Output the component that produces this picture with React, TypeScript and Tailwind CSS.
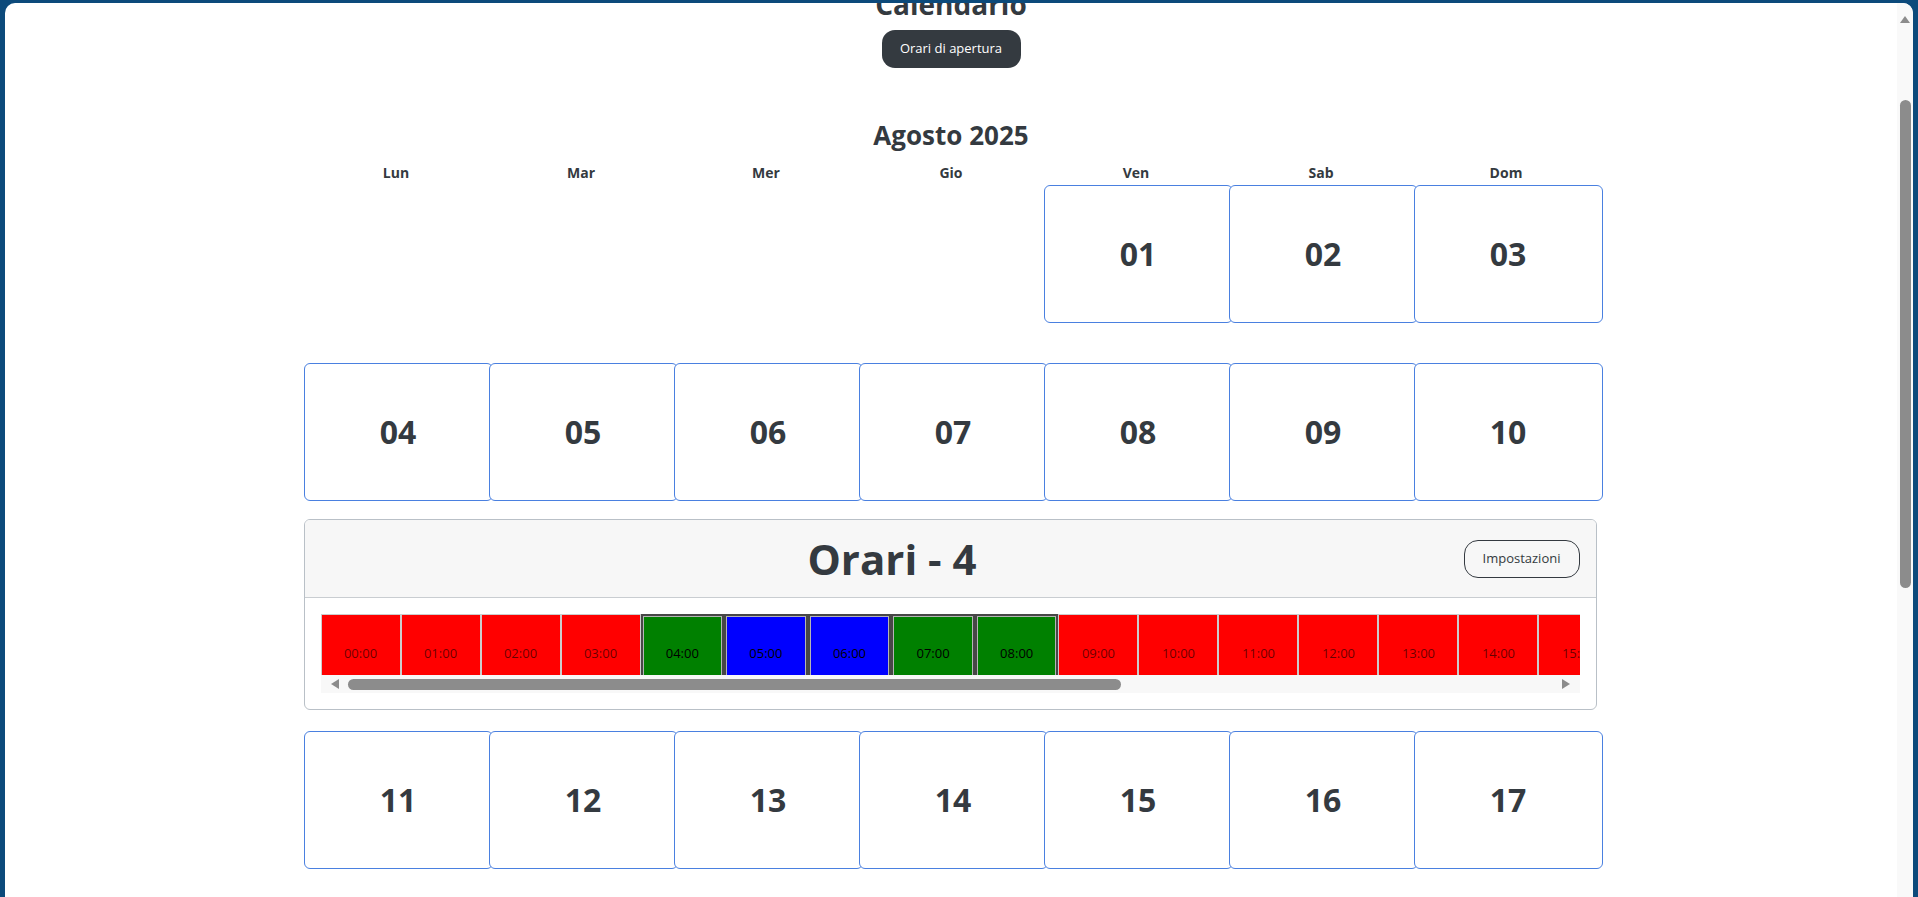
type Slot = { hour: string; state: 'closed' | 'open' | 'special' };

const font = { fontFamily: '"Open Sans", "Noto Sans", sans-serif' };

const weeks: (string | null)[][] = [
  [null, null, null, null, '01', '02', '03'],
  ['04', '05', '06', '07', '08', '09', '10'],
  ['11', '12', '13', '14', '15', '16', '17'],
];

const dayNames = ['Lun', 'Mar', 'Mer', 'Gio', 'Ven', 'Sab', 'Dom'];

// 24 fasce orarie, quelle aperte sono evidenziate
const slots: Slot[] = Array.from({ length: 24 }, (_, h) => ({
  hour: `${String(h).padStart(2, '0')}:00`,
  state: h === 5 || h === 6 ? 'special' : h >= 4 && h <= 8 ? 'open' : 'closed',
}));

function DayBox({ day }: { day: string | null }) {
  if (!day) return <div className="h-[138px]" />;
  return (
    <div className="w-[189px] h-[138px] rounded-[6px] border border-[#4a80e0] bg-white flex items-center justify-center">
      <span className="text-[32px] font-bold text-[#343a40] leading-none">{day}</span>
    </div>
  );
}

function Week({ days, className = '' }: { days: (string | null)[]; className?: string }) {
  return (
    <div className={`grid grid-cols-[repeat(7,185px)] ${className}`}>
      {days.map((d, i) => (
        <DayBox key={i} day={d} />
      ))}
    </div>
  );
}

function SlotCell({ slot }: { slot: Slot }) {
  const styles = {
    closed: 'w-[80px] bg-[#ff0000] border border-[#cccccc] text-black/60',
    open: 'w-[83.6px] bg-[#008000] border-2 border-[#474747] ring-1 ring-inset ring-[#b5b5b5] text-black',
    special: 'w-[83.6px] bg-[#0000ff] border-2 border-[#474747] ring-1 ring-inset ring-[#b5b5b5] text-black',
  };
  return (
    <div className={`shrink-0 h-[80px] flex items-center justify-center text-[13px] ${styles[slot.state]}`}>
      {slot.hour}
    </div>
  );
}

function HoursPanel() {
  return (
    <div className="w-[1293px] mt-[18px] mb-[21px] rounded-[6px] border border-[#b9c0c7] bg-white overflow-hidden">
      {/* Header */}
      <div className="h-[78px] bg-[#f7f7f7] border-b border-[#c9cdd1] flex items-center px-4">
        <h2 className="flex-1 text-center text-[42px] font-bold text-[#343a40] leading-none">Orari - 4</h2>
        <button className="w-[116px] h-[38px] rounded-[14px] border border-[#343a40] text-[13px] text-[#343a40]">
          Impostazioni
        </button>
      </div>

      {/* Body */}
      <div className="p-4">
        <div className="h-[61px] overflow-hidden flex">
          {slots.map((s) => (
            <SlotCell key={s.hour} slot={s} />
          ))}
        </div>
        {/* horizontal scrollbar */}
        <div className="h-[18px] bg-[#f8f8f8] flex items-center px-[10px] gap-[9px]">
          <div className="w-0 h-0 border-y-[5px] border-y-transparent border-r-[8px] border-r-[#8c8c8c]" />
          <div className="w-[773px] h-[11px] rounded-full bg-[#8c8c8c]" />
          <div className="flex-1" />
          <div className="w-0 h-0 border-y-[5px] border-y-transparent border-l-[8px] border-l-[#8c8c8c]" />
        </div>
      </div>
    </div>
  );
}

export default function App() {
  return (
    <div className="h-screen w-full bg-[#0c4a7b] pt-[3px] px-[5px] flex overflow-hidden" style={font}>
      <div className="flex-1 bg-white rounded-t-[10px] flex overflow-hidden">
        {/* Page */}
        <div className="flex-1 flex flex-col items-center">
          <h1 className="mt-[-16px] text-[28px] leading-[34px] font-bold text-[#343a40]">Calendario</h1>
          <button className="mt-[9px] w-[139px] h-[38px] rounded-[13px] bg-[#343a40] text-white text-[13px]">
            Orari di apertura
          </button>

          <h3 className="mt-[52px] text-[26px] leading-[30px] font-bold text-[#343a40]">Agosto 2025</h3>

          <div className="w-[1295px]">
            <div className="mt-[14px] grid grid-cols-[repeat(7,185px)] mb-[4px]">
              {dayNames.map((d) => (
                <div key={d} className="text-center text-[14px] leading-[17px] font-bold text-[#343a40]">
                  {d}
                </div>
              ))}
            </div>
            <Week days={weeks[0]} className="mb-[40px]" />
            <Week days={weeks[1]} />
            <HoursPanel />
            <Week days={weeks[2]} />
          </div>
        </div>

        {/* Vertical scrollbar */}
        <div className="w-[16px] bg-[#f9f9f9] flex flex-col items-center">
          <div className="mt-[13px] w-0 h-0 border-x-[5px] border-x-transparent border-b-[7px] border-b-[#8c8c8c]" />
          <div className="mt-[77px] w-[11px] h-[488px] rounded-full bg-[#8c8c8c]" />
        </div>
      </div>
    </div>
  );
}
